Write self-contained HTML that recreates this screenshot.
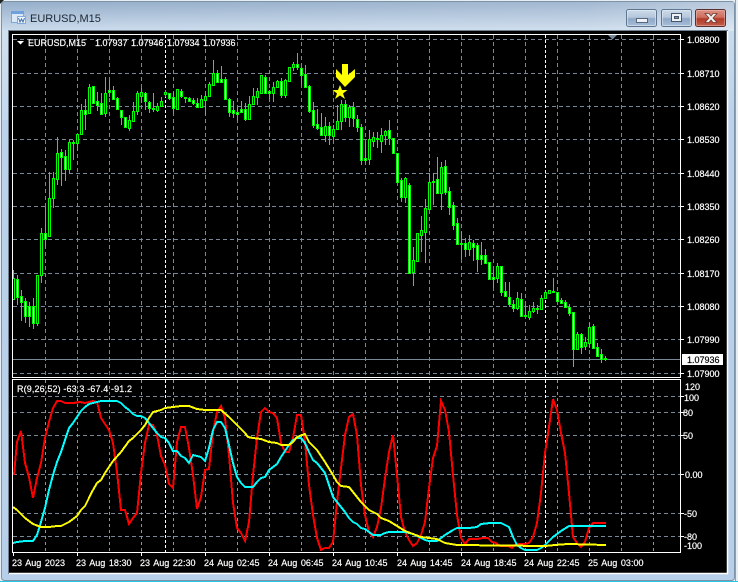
<!DOCTYPE html>
<html><head><meta charset="utf-8"><title>EURUSD,M15</title>
<style>
html,body{margin:0;padding:0;width:738px;height:582px;overflow:hidden;background:#fff}
svg{display:block;position:absolute;left:0;top:0}
text{font-family:"Liberation Sans",sans-serif;font-size:9px;fill:#fff;stroke:#fff;stroke-width:.18px}
.t{font-size:11px;fill:#1c2733;stroke:none}
.x{word-spacing:1.2px}
.b{fill:#000;stroke:#000}
polyline{shape-rendering:crispEdges}
</style></head><body>
<svg width="738" height="582" viewBox="0 0 738 582" xmlns="http://www.w3.org/2000/svg">
<defs>
<linearGradient id="fr" x1="0" y1="0" x2="0" y2="1"><stop offset="0" stop-color="#95aeca"/><stop offset=".05" stop-color="#cbdbec"/><stop offset=".2" stop-color="#bcd2ea"/><stop offset="1" stop-color="#b7cfe9"/></linearGradient>
<linearGradient id="fx" x1="0" y1="0" x2="1" y2="0"><stop offset="0" stop-color="#fff" stop-opacity="0"/><stop offset=".8" stop-color="#fff" stop-opacity=".12"/><stop offset="1" stop-color="#fff" stop-opacity=".35"/></linearGradient>
<linearGradient id="bt" x1="0" y1="0" x2="0" y2="1"><stop offset="0" stop-color="#cfdcea"/><stop offset=".45" stop-color="#b5c7dc"/><stop offset=".55" stop-color="#8fa8c6"/><stop offset="1" stop-color="#a9c0da"/></linearGradient>
<linearGradient id="cl" x1="0" y1="0" x2="0" y2="1"><stop offset="0" stop-color="#dc9486"/><stop offset=".45" stop-color="#cf6f5f"/><stop offset=".55" stop-color="#b23a28"/><stop offset="1" stop-color="#c5604c"/></linearGradient>
</defs>
<rect x="0" y="0" width="738" height="582" fill="#e6edf3"/>
<rect x="1.5" y="1.5" width="733" height="579" rx="3" fill="url(#fr)" stroke="#7d93a8"/>
<rect x="2" y="2" width="732" height="29" fill="url(#fx)"/>
<path d="M0 0H4L0 4Z" fill="#222"/>
<path d="M0 581.5H738" stroke="#26c6dc"/>
<path d="M735.5 0V582" stroke="#3fc0d8"/>
<rect x="2" y="30" width="6" height="90" fill="#fff" opacity=".15"/>
<!-- title -->
<g>
<rect x="11.5" y="11.5" width="12" height="11" fill="#dbe8f6" stroke="#7ea6d6"/>
<rect x="11" y="11" width="13" height="3" fill="#6f9fdc"/>
<rect x="17.5" y="16.5" width="8" height="7" fill="#eef4fb" stroke="#86aad8"/>
<path d="M18.5 18L20 22L21.500 19L23 22L24.500 18" fill="none" stroke="#3f6fae" stroke-width="1"/>
</g>
<text class="t" x="30" y="22">EURUSD,M15</text>
<!-- buttons -->
<rect x="626.500" y="9.500" width="30" height="17" rx="2" fill="url(#bt)" stroke="#5f7690"/>
<rect x="627.500" y="10.500" width="28" height="15" rx="1" fill="none" stroke="#e6eef6" stroke-opacity=".55"/>
<rect x="636.500" y="18.500" width="11" height="4" fill="#eef2f6" stroke="#56687c"/>
<rect x="661.500" y="9.500" width="30" height="17" rx="2" fill="url(#bt)" stroke="#5f7690"/>
<rect x="662.500" y="10.500" width="28" height="15" rx="1" fill="none" stroke="#e6eef6" stroke-opacity=".55"/>
<rect x="671.500" y="13.500" width="10" height="8" fill="#eef2f6" stroke="#44566a"/>
<rect x="674.500" y="16.500" width="4" height="2" fill="#7f93a8" stroke="#44566a"/>
<rect x="695.500" y="9.500" width="30" height="17" rx="2" fill="url(#cl)" stroke="#5d3030"/>
<rect x="696.500" y="10.500" width="28" height="15" rx="1" fill="none" stroke="#f0c8c0" stroke-opacity=".45"/>
<path d="M705 13.500h4l2 2.500 2-2.500h4l-4 4.500 4 4.500h-4l-2-2.500-2 2.500h-4l4-4.500z" fill="#f2f2f2" stroke="#6e3a34" stroke-width=".8"/>
<!-- client -->
<rect x="8" y="30" width="720" height="544" fill="#6f8090"/>
<rect x="9" y="31" width="718" height="542" fill="#000"/>
<path d="M727.500 31V574M9 573.500H728" stroke="#fff" stroke-width="1.500"/>
<!-- grid -->
<g stroke="#778899" fill="none" stroke-dasharray="4 3">
<path d="M13 39.500H680M13 73.500H680M13 106.500H680M13 139.500H680M13 173.500H680M13 206.500H680M13 239.500H680M13 273.500H680M13 306.500H680M13 339.500H680M13 373.500H680"/>
<path d="M13 396.500H680M13 412.500H680M13 435.500H680M13 474.500H680M13 513.500H680M13 536.500H680"/>
<path d="M45.500 35V377M77.500 35V377M109.500 35V377M141.500 35V377M173.500 35V377M205.500 35V377M237.500 35V377M269.500 35V377M301.500 35V377M333.500 35V377M365.500 35V377M397.500 35V377M429.500 35V377M461.500 35V377M493.500 35V377M525.500 35V377M557.500 35V377M589.500 35V377M621.500 35V377M653.500 35V377"/>
<path stroke-dasharray="3 3" stroke="#8a96a4" d="M45.500 380V552M77.500 380V552M109.500 380V552M141.500 380V552M173.500 380V552M205.500 380V552M237.500 380V552M269.500 380V552M301.500 380V552M333.500 380V552M365.500 380V552M397.500 380V552M429.500 380V552M461.500 380V552M493.500 380V552M525.500 380V552M557.500 380V552M589.500 380V552M621.500 380V552M653.500 380V552"/>
</g>
<path d="M165.500 35V377M545.500 35V377M165.500 380V552M545.500 380V552" stroke="#fff" stroke-dasharray="3 2" fill="none"/>
<path d="M13 359.500H680" stroke="#778899"/>
<!-- wicks -->
<path fill="none" stroke="#00ff00" d="M13.500 270V300M17.500 275V305M21.500 290V321M25.500 298V323M29.500 302V327M33.500 298V329M37.500 275V326M41.500 228V283M45.500 207V247M49.500 172V236M53.500 172V208M57.500 137V185M61.500 149V186M65.500 150V181M69.500 140V173M73.500 140V160M77.500 134V151M81.500 104V135M85.500 99V130M89.500 84V114M93.500 86V103M97.500 92V111M101.500 93V115M105.500 77V117M109.500 80V97M113.500 86V100M117.500 97V110M121.500 110V125M125.500 117V128M129.500 115V131M133.500 102V122M137.500 91V115M141.500 88V103M145.500 92V110M149.500 101V113M153.500 93V112M157.500 103V112M161.500 97V107M165.500 90V97M169.500 93V100M173.500 92V113M177.500 89V109M181.500 89V98M185.500 97V103M189.500 97V102M193.500 98V105M197.500 98V107M201.500 95V107M205.500 93V115M209.500 82V97M213.500 60V86M217.500 70V83M221.500 66V83M225.500 77V100M229.500 98V117M233.500 101V118M237.500 107V121M241.500 101V113M245.500 103V121M249.500 96V120M253.500 88V105M257.500 88V105M261.500 75V93M265.500 75V93M269.500 90V99M273.500 82V102M277.500 80V88M281.500 78V98M285.500 79V98M289.500 67V82M293.500 62V71M297.500 53V70M301.500 67V85M305.500 65V87M309.500 85V113M313.500 102V128M317.500 109V130M321.500 113V135M325.500 117V142M329.500 122V145M333.500 125V140M337.500 105V130M341.500 100V130M345.500 100V122M349.500 105V127M353.500 102V127M357.500 115V132M361.500 124V165M365.500 142V163M369.500 130V165M373.500 132V147M377.500 132V148M381.500 128V153M385.500 130V145M389.500 120V145M393.500 138V154M397.500 153V182M401.500 178V202M405.500 177V203M409.500 183V273M413.500 247V286M417.500 233V261M421.500 216V252M425.500 199V263M429.500 173V210M433.500 173V205M437.500 157V193M441.500 162V210M445.500 160V195M449.500 187V215M453.500 202V230M457.500 218V245M461.500 232V259M465.500 238V257M469.500 235V256M473.500 240V261M477.500 243V272M481.500 242V265M485.500 249V263M489.500 262V280M493.500 270V288M497.500 263V283M501.500 266V296M505.500 282V297M509.500 282V307M513.500 300V312M517.500 292V310M521.500 293V317M525.500 305V317M529.500 305V320M533.500 302V313M537.500 305V314M541.500 295V310M545.500 290V298M549.500 290V294M553.500 278V292M557.500 292V302M561.500 298V303M565.500 300V308M569.500 304V316M573.500 312V367M577.500 332V350M581.500 333V354M585.500 337V350M589.500 323V348M593.500 324V349M597.500 343V357M601.500 349V363M605.500 356V361"/>
<!-- bear bodies -->
<path fill="#fff" stroke="#00ff00" d="M16.500 279.500h2v18h-2zM20.500 296.500h2v6h-2zM24.500 301.500h2v15h-2zM28.500 306.500h2v10h-2zM32.500 306.500h2v17h-2zM44.500 233.500h2v6h-2zM60.500 152.500h2v5h-2zM64.500 156.500h2v13h-2zM84.500 110.500h2v4h-2zM92.500 86.500h2v17h-2zM96.500 101.500h2v4h-2zM100.500 103.500h2v11h-2zM108.500 90.500h2v2h-2zM112.500 90.500h2v9h-2zM116.500 98.500h2v11h-2zM120.500 110.500h2v7h-2zM124.500 117.500h2v10h-2zM144.500 93.500h2v8h-2zM148.500 102.500h2v6h-2zM152.500 108.500h2v1h-2zM168.500 93.500h2v5h-2zM172.500 97.500h2v11h-2zM180.500 91.500h2v5h-2zM184.500 97.500h2v1h-2zM188.500 98.500h2v3h-2zM192.500 100.500h2v3h-2zM196.500 103.500h2v4h-2zM216.500 73.500h2v9h-2zM220.500 79.500h2v3h-2zM224.500 79.500h2v20h-2zM228.500 99.500h2v13h-2zM232.500 110.500h2v3h-2zM236.500 112.500h2v2h-2zM240.500 109.500h2v3h-2zM244.500 109.500h2v10h-2zM264.500 77.500h2v16h-2zM268.500 91.500h2v2h-2zM280.500 81.500h2v14h-2zM296.500 64.500h2v3h-2zM300.500 68.500h2v7h-2zM304.500 74.500h2v13h-2zM308.500 86.500h2v25h-2zM312.500 110.500h2v15h-2zM316.500 124.500h2v4h-2zM320.500 127.500h2v8h-2zM328.500 126.500h2v9h-2zM344.500 104.500h2v13h-2zM352.500 107.500h2v11h-2zM356.500 119.500h2v8h-2zM360.500 127.500h2v33h-2zM364.500 158.500h2v2h-2zM376.500 138.500h2v1h-2zM388.500 130.500h2v8h-2zM392.500 138.500h2v15h-2zM396.500 153.500h2v29h-2zM400.500 180.500h2v17h-2zM408.500 185.500h2v88h-2zM432.500 181.500h2v1h-2zM436.500 179.500h2v14h-2zM444.500 166.500h2v26h-2zM448.500 191.500h2v16h-2zM452.500 205.500h2v20h-2zM456.500 223.500h2v21h-2zM460.500 243.500h2v1h-2zM464.500 243.500h2v6h-2zM472.500 243.500h2v4h-2zM476.500 245.500h2v14h-2zM480.500 255.500h2v4h-2zM484.500 255.500h2v8h-2zM488.500 262.500h2v17h-2zM492.500 277.500h2v2h-2zM500.500 266.500h2v26h-2zM504.500 291.500h2v5h-2zM508.500 297.500h2v7h-2zM512.500 304.500h2v4h-2zM520.500 299.500h2v17h-2zM524.500 315.500h2v1h-2zM536.500 308.500h2v1h-2zM552.500 291.500h2v1h-2zM556.500 292.500h2v9h-2zM560.500 300.500h2v3h-2zM564.500 302.500h2v5h-2zM568.500 307.500h2v6h-2zM572.500 312.500h2v37h-2zM580.500 334.500h2v13h-2zM592.500 326.500h2v22h-2zM596.500 347.500h2v9h-2zM600.500 354.500h2v5h-2zM604.500 358.500h2v1h-2z"/>
<!-- bull bodies -->
<path fill="#000" stroke="#00ff00" d="M12.500 278.500h2v21h-2zM36.500 275.500h2v48h-2zM40.500 233.500h2v42h-2zM48.500 198.500h2v38h-2zM52.500 178.500h2v20h-2zM56.500 153.500h2v26h-2zM68.500 142.500h2v27h-2zM72.500 142.500h2v1h-2zM76.500 134.500h2v9h-2zM80.500 110.500h2v24h-2zM88.500 87.500h2v26h-2zM104.500 93.500h2v20h-2zM128.500 120.500h2v8h-2zM132.500 111.500h2v10h-2zM136.500 93.500h2v18h-2zM140.500 92.500h2v4h-2zM156.500 106.500h2v4h-2zM160.500 101.500h2v5h-2zM164.500 92.500h2v2h-2zM176.500 89.500h2v20h-2zM200.500 99.500h2v8h-2zM204.500 96.500h2v4h-2zM208.500 84.500h2v12h-2zM212.500 73.500h2v12h-2zM248.500 104.500h2v15h-2zM252.500 96.500h2v8h-2zM256.500 91.500h2v6h-2zM260.500 75.500h2v18h-2zM272.500 87.500h2v6h-2zM276.500 81.500h2v6h-2zM284.500 80.500h2v15h-2zM288.500 67.500h2v14h-2zM292.500 64.500h2v3h-2zM324.500 126.500h2v9h-2zM332.500 129.500h2v7h-2zM336.500 121.500h2v8h-2zM340.500 104.500h2v17h-2zM348.500 107.500h2v10h-2zM368.500 139.500h2v20h-2zM372.500 137.500h2v4h-2zM380.500 135.500h2v6h-2zM384.500 131.500h2v4h-2zM404.500 178.500h2v19h-2zM412.500 260.500h2v12h-2zM416.500 233.500h2v28h-2zM420.500 230.500h2v5h-2zM424.500 208.500h2v24h-2zM428.500 182.500h2v27h-2zM440.500 167.500h2v26h-2zM468.500 242.500h2v7h-2zM496.500 266.500h2v12h-2zM516.500 298.500h2v10h-2zM528.500 311.500h2v6h-2zM532.500 308.500h2v3h-2zM540.500 298.500h2v11h-2zM544.500 292.500h2v6h-2zM548.500 290.500h2v3h-2zM576.500 334.500h2v15h-2zM584.500 342.500h2v4h-2zM588.500 327.500h2v16h-2z"/>
<!-- arrow + star -->
<path d="M342 64H348V75L355 69V77L345 87L336 77V69L342 75Z" fill="#ffff00"/>
<path d="M340 85L342 90H347.500L343 93.500L345 99L340 95.500L335 99L337 93.500L332.500 90H338Z" fill="#ffff00"/>
<!-- indicator lines -->
<polyline fill="none" stroke="#ff0000" stroke-width="2" points="14,475 17,442 21,431 25,463 29,477 33,498 37,478 41,463 45,438 49,422 53,408 57,401 61,401 65,403 73,403 80,402 85,403 93,401 97,402 101,418 105,424 109,430 113,443 117,472 121,510 125,510 129,524 133,518 137,513 141,473 145,443 149,425 153,425 157,435 161,456 165,465 169,484 173,488 177,442 181,427 185,427 189,448 193,475 197,509 201,497 205,470 209,469 213,432 217,412 221,406 225,418 229,455 233,503 237,528 241,533 245,541 249,522 253,475 257,438 261,412 265,408 269,412 273,413 277,418 281,443 285,452 289,452 293,438 297,415 301,415 305,442 309,485 313,515 317,538 321,550 325,548 329,548 333,542 337,502 341,468 345,435 349,417 353,414 357,435 361,485 365,515 369,532 373,537 377,527 381,508 385,478 389,452 393,435 397,475 401,517 405,532 409,540 413,546 417,543 421,535 425,522 429,488 433,458 437,446 441,401 445,410 449,432 453,475 457,515 461,538 465,544 469,539 477,539 483,538 488,538 492,542 496,543 500,546 508,546 512,548 516,544 525,544 529,543 533,537 537,523 541,493 545,453 549,427 553,399 557,410 561,433 565,453 569,493 573,537 577,543 581,547 585,542 589,528 593,523 597,523 606,523"/>
<polyline fill="none" stroke="#00ffff" stroke-width="2" points="13,543 17,542 25,541 33,541 37,535 41,522 45,508 49,490 53,475 57,462 61,452 65,440 69,428 73,423 77,417 81,411 85,407 89,404 93,403 101,401 117,401 121,403 125,407 129,410 133,414 137,416 141,416 145,418 149,423 153,428 157,433 161,437 165,438 169,443 173,451 177,451 181,456 185,458 189,463 193,455 197,456 201,457 205,461 209,448 213,430 217,422 221,422 225,428 229,445 233,463 237,477 241,483 245,487 253,487 257,482 261,478 265,477 269,470 273,467 277,464 281,457 285,451 289,445 293,440 297,438 301,438 305,443 309,452 313,460 317,463 321,468 325,473 329,485 333,497 337,502 341,507 345,512 349,518 353,522 357,524 361,528 365,529 369,532 373,535 381,535 385,533 389,532 405,532 413,534 421,538 425,540 429,541 437,541 441,538 445,535 453,530 457,528 469,528 477,527 481,524 490,523 501,523 505,525 509,527 513,537 517,545 521,548 525,550 537,550 541,548 545,545 553,537 561,531 569,526 606,526"/>
<polyline fill="none" stroke="#ffff00" stroke-width="2" points="13,507 17,510 25,518 33,524 41,527 49,527 57,526 61,526 69,522 73,519 77,516 81,510 85,506 89,498 93,490 97,483 101,480 105,473 109,467 113,461 121,452 129,441 133,438 141,430 145,425 149,418 153,412 161,410 165,408 173,407 181,406 189,406 197,409 205,410 221,410 229,417 237,425 245,433 248,437 253,438 261,439 269,442 277,443 281,445 289,445 293,442 297,437 305,434 309,442 317,450 325,462 333,475 337,482 341,486 349,487 353,492 361,502 369,510 377,514 381,518 389,521 397,526 405,531 413,534 421,537 429,538 437,539 445,543 457,545 545,546 555,545 568,544 606,545"/>
<!-- frames -->
<rect x="12.500" y="34.500" width="668" height="343" fill="none" stroke="#fff"/>
<rect x="12.500" y="379.500" width="668" height="173" fill="none" stroke="#fff"/>
<path d="M608 35H617L612.500 39.500Z" fill="#778899"/>
<path d="M17 41H24L20.500 44.500Z" fill="#fff"/>
<!-- right ticks -->
<path stroke="#fff" d="M681 39.500h3M681 73.500h3M681 106.500h3M681 139.500h3M681 173.500h3M681 206.500h3M681 239.500h3M681 273.500h3M681 306.500h3M681 339.500h3M681 373.500h3M681 396.500h3M681 412.500h3M681 435.500h3M681 474.500h3M681 513.500h3M681 536.500h3"/>
<path stroke="#fff" d="M13.500 553v3M77.500 553v3M141.500 553v3M205.500 553v3M269.500 553v3M333.500 553v3M397.500 553v3M461.500 553v3M525.500 553v3M589.500 553v3"/>
<!-- legend -->
<text x="28" y="46">EURUSD,M15</text>
<text x="95" y="46">1.07937</text><text x="131" y="46">1.07946</text><text x="167" y="46">1.07934</text><text x="203" y="46">1.07936</text>
<text x="17" y="392" textLength="115">R(9,26,52) -63.3 -67.4 -91.2</text>
<!-- price labels -->
<text x="687" y="43">1.08800</text><text x="687" y="77">1.08710</text><text x="687" y="110">1.08620</text><text x="687" y="143">1.08530</text><text x="687" y="177">1.08440</text><text x="687" y="210">1.08350</text><text x="687" y="243">1.08260</text><text x="687" y="277">1.08170</text><text x="687" y="310">1.08080</text><text x="687" y="343">1.07990</text><text x="687" y="377">1.07900</text>
<rect x="682" y="354" width="41" height="11" fill="#fff"/>
<text class="b" x="687" y="363">1.07936</text>
<!-- indicator labels -->
<text x="685" y="390">120</text><text x="684" y="401">100</text><text x="683" y="416">80</text><text x="683" y="439">50</text><text x="685" y="478">0.00</text><text x="684" y="517">-50</text><text x="684" y="540">-80</text><text x="684" y="549">-100</text>
<!-- time labels -->
<g class="x">
<text x="12" y="566">23 Aug 2023</text><text x="76" y="566">23 Aug 18:30</text><text x="140" y="566">23 Aug 22:30</text><text x="204" y="566">24 Aug 02:45</text><text x="268" y="566">24 Aug 06:45</text><text x="332" y="566">24 Aug 10:45</text><text x="397" y="566">24 Aug 14:45</text><text x="461" y="566">24 Aug 18:45</text><text x="524" y="566">24 Aug 22:45</text><text x="588" y="566">25 Aug 03:00</text>
</g>
</svg>
</body></html>
